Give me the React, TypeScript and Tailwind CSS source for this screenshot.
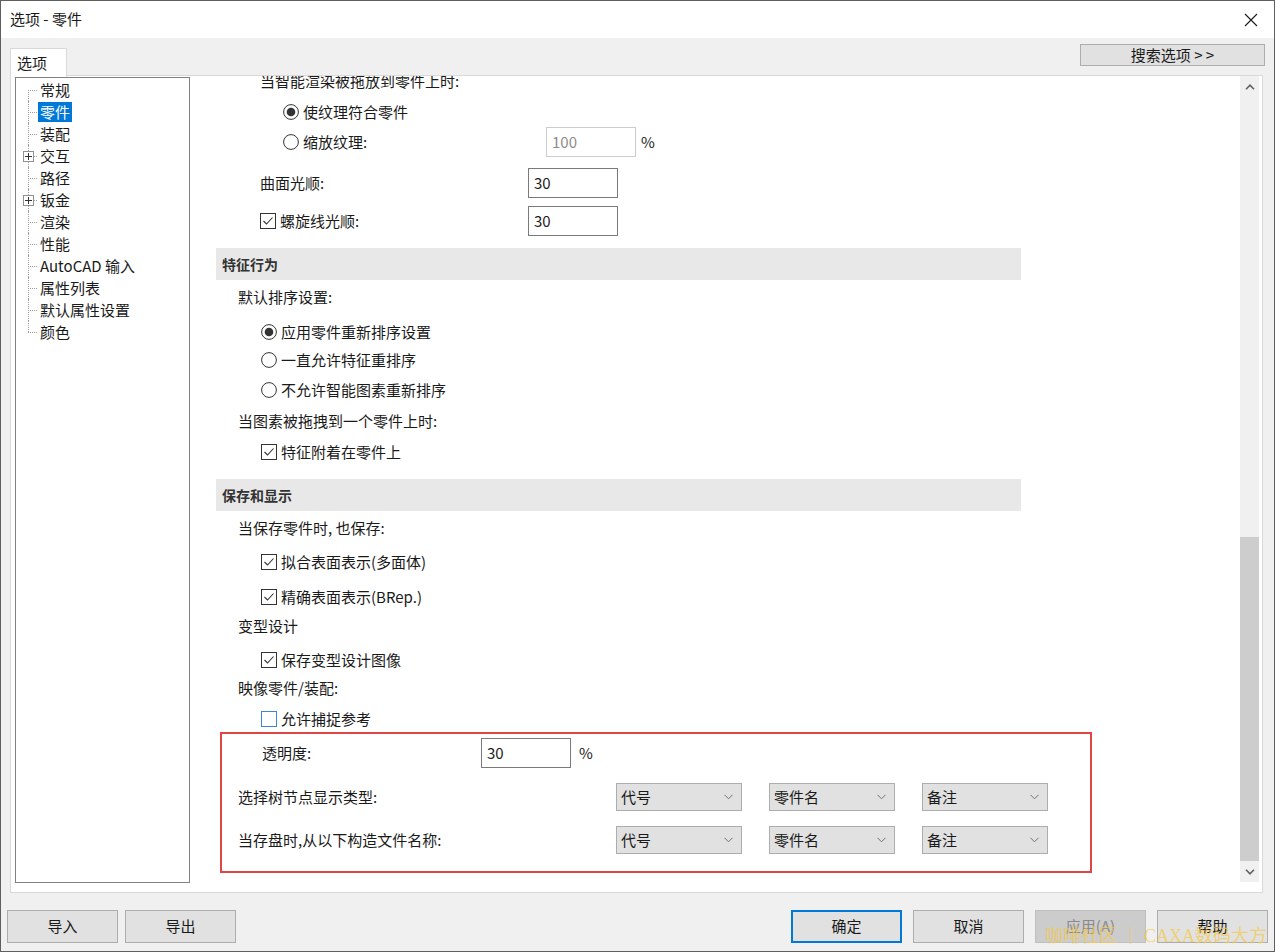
import type { ReactNode } from 'react';

const FONT = { fontFamily: '"Noto Sans CJK SC", "Noto Sans", sans-serif' };

const Check = ({ checked, blue }: { checked?: boolean; blue?: boolean }) => (
  <svg width="16" height="16" viewBox="0 0 16 16" className="shrink-0">
    <rect x="0.5" y="0.5" width="15" height="15" fill="white" stroke={blue ? '#3b86d6' : '#333333'} />
    {checked && <polyline points="3.5,8 6.5,11 12.5,4.5" fill="none" stroke="#333333" strokeWidth="1.1" />}
  </svg>
);

const Radio = ({ checked }: { checked?: boolean }) => (
  <svg width="16" height="16" viewBox="0 0 16 16" className="shrink-0">
    <circle cx="8" cy="8" r="7.4" fill="white" stroke="#333333" />
    {checked && <circle cx="8" cy="8" r="4.3" fill="#333333" />}
  </svg>
);

const Chevron = () => (
  <svg width="9" height="6" viewBox="0 0 9 6">
    <polyline points="0.5,0.8 4.5,4.8 8.5,0.8" fill="none" stroke="#707070" strokeWidth="1" />
  </svg>
);

const Select = ({ value }: { value: string }) => (
  <div className="w-[126px] h-[28px] bg-[#e1e1e1] border border-[#adadad] flex items-center justify-between pl-[4px] pr-[8px] text-[15px] text-[#1a1a1a]">
    <span>{value}</span>
    <Chevron />
  </div>
);

const Field = ({ value, disabled }: { value: string; disabled?: boolean }) => (
  <div
    className={`w-[90px] h-[30px] bg-white border flex items-center pl-[5px] text-[15px] ${
      disabled ? 'border-[#cccccc] text-[#8c8c8c]' : 'border-[#7a7a7a] text-[#1a1a1a]'
    }`}
  >
    {value}
  </div>
);

const Header = ({ title, className }: { title: string; className: string }) => (
  <div className={`ml-[20px] w-[805px] h-[32px] bg-[#e8e8e8] flex items-center pl-[6px] text-[14px] font-bold text-[#333] ${className}`}>
    {title}
  </div>
);

const Row = ({ children, className }: { children: ReactNode; className: string }) => (
  <div className={`flex items-center h-[22px] ${className}`}>{children}</div>
);

const treeItems = [
  { label: '常规' },
  { label: '零件', selected: true },
  { label: '装配' },
  { label: '交互', plus: true },
  { label: '路径' },
  { label: '钣金', plus: true },
  { label: '渲染' },
  { label: '性能' },
  { label: 'AutoCAD 输入' },
  { label: '属性列表' },
  { label: '默认属性设置' },
  { label: '颜色' },
];

const Tree = () => (
  <div className="w-[175px] h-[806px] mt-[1px] border border-[#828282] bg-white pt-[1px] shrink-0">
    {treeItems.map((item, i) => (
      <div key={item.label} className="relative h-[22px] flex items-center">
        <div className="relative w-[24px] h-full shrink-0">
          <div
            className={`absolute left-[12px] w-0 border-l border-dotted border-[#a0a0a0] ${
              i === 0 ? 'top-[11px] bottom-0' : i === treeItems.length - 1 ? 'top-0 h-[11px]' : 'top-0 bottom-0'
            }`}
          />
          <div className="absolute left-[12px] top-[11px] w-[9px] h-0 border-t border-dotted border-[#a0a0a0]" />
          {item.plus && (
            <div className="absolute left-[7px] top-[6px] w-[11px] h-[11px] bg-white border border-[#919191] flex items-center justify-center">
              <svg width="7" height="7" viewBox="0 0 7 7">
                <path d="M0 3.5H7M3.5 0V7" stroke="#333" strokeWidth="1" />
              </svg>
            </div>
          )}
        </div>
        <span
          className={`text-[15px] leading-[20px] px-[2px] -ml-[2px] ${
            item.selected ? 'bg-[#0078d7] text-white' : 'text-[#1a1a1a]'
          }`}
        >
          {item.label}
        </span>
      </div>
    ))}
  </div>
);

const Scrollbar = () => (
  <div className="w-[19px] h-[806px] bg-[#f0f0f0] flex flex-col shrink-0">
    <div className="h-[21px] flex items-center justify-center">
      <svg width="10" height="6" viewBox="0 0 10 6">
        <polyline points="1,5.2 5,1.2 9,5.2" fill="none" stroke="#606060" strokeWidth="1.6" />
      </svg>
    </div>
    <div className="flex-1" />
    <div className="h-[324px] bg-[#cdcdcd]" />
    <div className="h-[21px] flex items-center justify-center">
      <svg width="10" height="6" viewBox="0 0 10 6">
        <polyline points="1,0.8 5,4.8 9,0.8" fill="none" stroke="#606060" strokeWidth="1.6" />
      </svg>
    </div>
  </div>
);

const Content = () => (
  <div className="w-[1044px] h-[806px] overflow-hidden bg-white text-[15px] leading-[20px] text-[#1a1a1a]">
    <Row className="-mt-[6px] pl-[64px]">当智能渲染被拖放到零件上时:</Row>
    <div className="flex items-center h-[30px] mt-[5px] pl-[87px] gap-[4px]">
      <Radio checked />
      <span>使纹理符合零件</span>
    </div>
    <div className="flex items-center h-[30px] pl-[87px]">
      <div className="w-[263px] flex items-center gap-[4px]">
        <Radio />
        <span>缩放纹理:</span>
      </div>
      <Field value="100" disabled />
      <span className="ml-[5px]">%</span>
    </div>
    <div className="flex items-center h-[30px] mt-[11px] pl-[64px]">
      <span className="w-[268px]">曲面光顺:</span>
      <Field value="30" />
    </div>
    <div className="flex items-center h-[30px] mt-[8px] pl-[64px]">
      <div className="w-[268px] flex items-center gap-[4px]">
        <Check checked />
        <span>螺旋线光顺:</span>
      </div>
      <Field value="30" />
    </div>

    <Header title="特征行为" className="mt-[12px]" />
    <Row className="mt-[6px] pl-[42px]">默认排序设置:</Row>
    <Row className="mt-[13px] pl-[65px] gap-[4px]">
      <Radio checked />
      <span>应用零件重新排序设置</span>
    </Row>
    <Row className="mt-[6px] pl-[65px] gap-[4px]">
      <Radio />
      <span>一直允许特征重排序</span>
    </Row>
    <Row className="mt-[8px] pl-[65px] gap-[4px]">
      <Radio />
      <span>不允许智能图素重新排序</span>
    </Row>
    <Row className="mt-[9px] pl-[42px]">当图素被拖拽到一个零件上时:</Row>
    <Row className="mt-[9px] pl-[65px] gap-[4px]">
      <Check checked />
      <span>特征附着在零件上</span>
    </Row>

    <Header title="保存和显示" className="mt-[16px]" />
    <Row className="mt-[6px] pl-[42px]">当保存零件时, 也保存:</Row>
    <Row className="mt-[12px] pl-[65px] gap-[4px]">
      <Check checked />
      <span>拟合表面表示(多面体)</span>
    </Row>
    <Row className="mt-[13px] pl-[65px] gap-[4px]">
      <Check checked />
      <span>精确表面表示(BRep.)</span>
    </Row>
    <Row className="mt-[7px] pl-[42px]">变型设计</Row>
    <Row className="mt-[12px] pl-[65px] gap-[4px]">
      <Check checked />
      <span>保存变型设计图像</span>
    </Row>
    <Row className="mt-[6px] pl-[42px]">映像零件/装配:</Row>
    <Row className="mt-[9px] pl-[65px] gap-[4px]">
      <Check blue />
      <span>允许捕捉参考</span>
    </Row>

    <div className="ml-[24px] mt-[2px] w-[872px] border-2 border-[#e04545] pb-[17px]">
      <div className="flex items-center h-[30px] mt-[4px] pl-[40px]">
        <span className="w-[219px]">透明度:</span>
        <Field value="30" />
        <span className="ml-[8px]">%</span>
      </div>
      <div className="flex items-center mt-[15px] pl-[16px]">
        <span className="w-[378px]">选择树节点显示类型:</span>
        <div className="flex gap-[27px]">
          <Select value="代号" />
          <Select value="零件名" />
          <Select value="备注" />
        </div>
      </div>
      <div className="flex items-center mt-[15px] pl-[16px]">
        <span className="w-[378px]">当存盘时,从以下构造文件名称:</span>
        <div className="flex gap-[27px]">
          <Select value="代号" />
          <Select value="零件名" />
          <Select value="备注" />
        </div>
      </div>
    </div>
  </div>
);

const Btn = ({ label, primary, disabled }: { label: string; primary?: boolean; disabled?: boolean }) => (
  <div
    className={`w-[111px] h-[33px] flex items-center justify-center text-[15px] ${
      primary
        ? 'bg-[#e1e1e1] border-2 border-[#0078d7] text-[#1a1a1a]'
        : disabled
        ? 'bg-[#cccccc] border border-[#bfbfbf] text-[#8a8a8a]'
        : 'bg-[#e1e1e1] border border-[#adadad] text-[#1a1a1a]'
    }`}
  >
    {label}
  </div>
);

export default function App() {
  return (
    <div
      className="relative w-[1275px] h-[952px] border border-[#5f5f5f] bg-[#f0f0f0] flex flex-col overflow-hidden"
      style={FONT}
    >
      {/* title bar */}
      <div className="h-[37px] bg-white flex items-center justify-between pl-[9px] pr-[16px] shrink-0">
        <span className="text-[15px] text-[#1a1a1a]">选项 - 零件</span>
        <svg width="14" height="14" viewBox="0 0 14 14">
          <path d="M1 1L13 13M13 1L1 13" stroke="#1a1a1a" strokeWidth="1.1" />
        </svg>
      </div>

      {/* tab row */}
      <div className="flex justify-between items-start h-[38px] pl-[9px] pr-[9px] pt-[6px]">
        <div className="mt-[4px] w-[57px] h-[29px] bg-white border border-b-0 border-[#d9d9d9] flex items-center pl-[6px] text-[15px] text-[#1a1a1a] relative z-10">
          选项
        </div>
        <div className="w-[185px] h-[22px] bg-[#e1e1e1] border border-[#adadad] flex items-center justify-center text-[15px] text-[#1a1a1a]">
          搜索选项 &gt; &gt;
        </div>
      </div>

      {/* tab panel */}
      <div className="ml-[9px] -mt-px w-[1253px] h-[818px] border border-[#d9d9d9] bg-white flex pl-[4px]">
        <Tree />
        <div className="ml-[6px] flex">
          <Content />
          <Scrollbar />
        </div>
      </div>

      {/* bottom buttons */}
      <div className="mt-[17px] px-[6px] flex justify-between">
        <div className="flex gap-[7px]">
          <Btn label="导入" />
          <Btn label="导出" />
        </div>
        <div className="flex gap-[11px]">
          <Btn label="确定" primary />
          <Btn label="取消" />
          <Btn label="应用(A)" disabled />
          <Btn label="帮助" />
        </div>
      </div>

      {/* watermark */}
      <div
        className="absolute left-[1044px] top-[922px] text-[18px] whitespace-nowrap text-[#f5c842]/70"
        style={{ fontFamily: '"Liberation Serif", "Noto Sans CJK SC", serif' }}
      >
        咖啡社区 ｜ CAXA数码大方
      </div>
    </div>
  );
}
